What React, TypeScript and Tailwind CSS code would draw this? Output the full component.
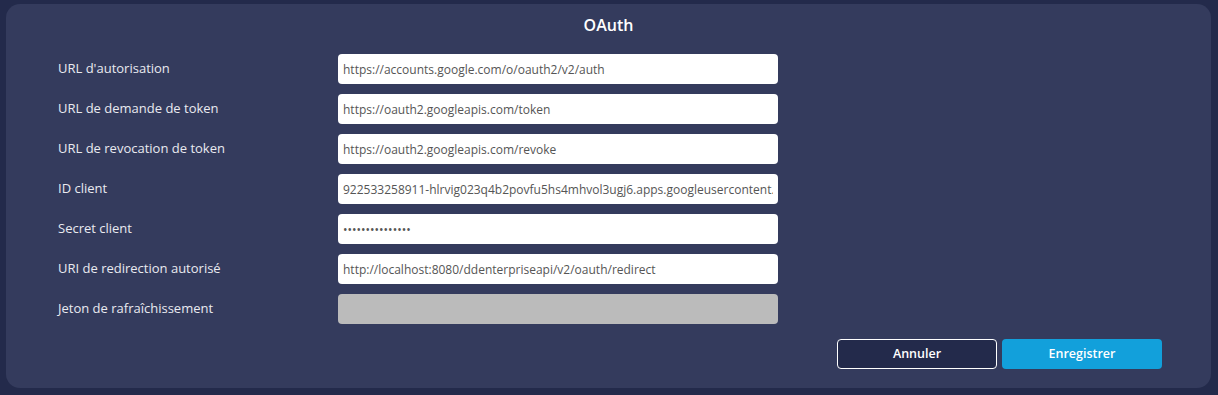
import React from "react";

const rows: { label: string; value: string; disabled?: boolean }[] = [
  { label: "URL d'autorisation", value: "https://accounts.google.com/o/oauth2/v2/auth" },
  { label: "URL de demande de token", value: "https://oauth2.googleapis.com/token" },
  { label: "URL de revocation de token", value: "https://oauth2.googleapis.com/revoke" },
  { label: "ID client", value: "922533258911-hlrvig023q4b2povfu5hs4mhvol3ugj6.apps.googleusercontent.com" },
  { label: "Secret client", value: "•••••••••••••••" },
  { label: "URI de redirection autorisé", value: "http://localhost:8080/ddenterpriseapi/v2/oauth/redirect" },
  { label: "Jeton de rafraîchissement", value: "", disabled: true },
];

export default function App() {
  return (
    <div
      className="w-[1218px] h-[395px] bg-[#232a4b] pt-[4px] pl-[6px]"
      style={{ fontFamily: '"Open Sans", "Noto Sans", sans-serif' }}
    >
      <div className="w-[1205px] h-[384px] bg-[#343b5d] rounded-[14px] flex flex-col">
        <div className="pt-[9px] h-[50px] text-center text-white text-[16px] leading-[24px] font-semibold">
          OAuth
        </div>
        <div className="flex flex-col gap-[10px] pl-[52px]">
          {rows.map((r) => (
            <div key={r.label} className="flex items-center h-[30px]">
              <div className="w-[280px] text-[13px] text-[#e9eaf0]">{r.label}</div>
              <input
                readOnly
                disabled={r.disabled}
                value={r.value}
                className={
                  "w-[440px] h-[30px] rounded-[4px] px-[5px] text-[12px] text-[#555555] outline-none " +
                  (r.disabled ? "bg-[#bbbbbb]" : "bg-white")
                }
              />
            </div>
          ))}
        </div>
        <div className="flex justify-end gap-[5px] pr-[49px] mt-[15px]">
          <button className="w-[160px] h-[30px] rounded-[4px] border border-white bg-[#232a4b] text-white text-[12.5px] font-semibold">
            Annuler
          </button>
          <button className="w-[160px] h-[30px] rounded-[4px] bg-[#12a0db] text-white text-[12.5px] font-semibold">
            Enregistrer
          </button>
        </div>
      </div>
    </div>
  );
}
